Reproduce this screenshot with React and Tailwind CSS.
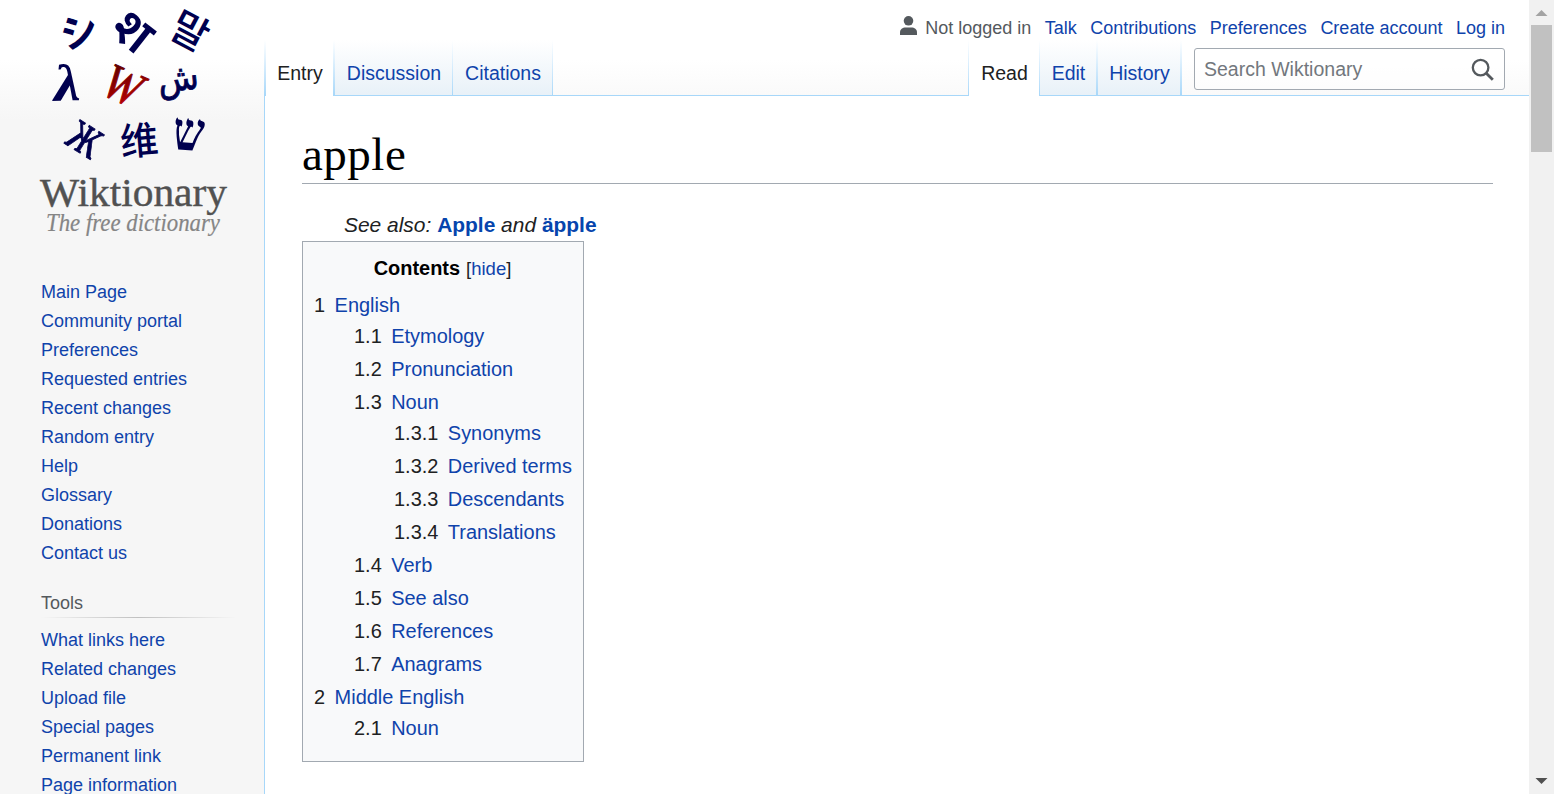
import React from 'react';

const NAV = ['Main Page', 'Community portal', 'Preferences', 'Requested entries', 'Recent changes', 'Random entry', 'Help', 'Glossary', 'Donations', 'Contact us'];
const TOOLS = ['What links here', 'Related changes', 'Upload file', 'Special pages', 'Permanent link', 'Page information'];

const TOC = [
  { n: '1', t: 'English', children: [
    { n: '1.1', t: 'Etymology' },
    { n: '1.2', t: 'Pronunciation' },
    { n: '1.3', t: 'Noun', children: [
      { n: '1.3.1', t: 'Synonyms' },
      { n: '1.3.2', t: 'Derived terms' },
      { n: '1.3.3', t: 'Descendants' },
      { n: '1.3.4', t: 'Translations' },
    ] },
    { n: '1.4', t: 'Verb' },
    { n: '1.5', t: 'See also' },
    { n: '1.6', t: 'References' },
    { n: '1.7', t: 'Anagrams' },
  ] },
  { n: '2', t: 'Middle English', children: [{ n: '2.1', t: 'Noun' }] },
];

function TocList({ items, nested }) {
  return (
    <ul className={nested ? '-mt-0.5 pl-10' : 'pt-px'}>
      {items.map((i) => (
        <li key={i.n}>
          <div className="flex h-[33px] items-center whitespace-nowrap">
            <span className="pr-[9.5px] text-[#202122]">{i.n}</span>
            <a className="text-[#0f43ab]">{i.t}</a>
          </div>
          {i.children && <TocList items={i.children} nested />}
        </li>
      ))}
    </ul>
  );
}

function Glyph({ x, y, r = 0, size, font, weight, fill = '#00004f', italic, sx = 1, stroke = 0, children }) {
  return (
    <text transform={`translate(${x} ${y}) rotate(${r}) scale(${sx} 1)`} fontSize={size} fontFamily={font} fontWeight={weight} fontStyle={italic ? 'italic' : 'normal'} fill={fill} stroke={fill} strokeWidth={stroke} textAnchor="middle" dominantBaseline="central">
      {children}
    </text>
  );
}

function Logo() {
  const serif = '"Liberation Serif", serif';
  return (
    <svg width="264" height="245" viewBox="0 0 264 245" className="block shrink-0 overflow-visible">
      <defs>
        <linearGradient id="red" x1="0" y1="0" x2="0.6" y2="1">
          <stop offset="0" stopColor="#4d0000" />
          <stop offset="1" stopColor="#c00000" />
        </linearGradient>
      </defs>
      <Glyph x={78.5} y={29} r={-16} size={38} font='"Noto Sans CJK JP", sans-serif' weight="700">シ</Glyph>
      <Glyph x={134.5} y={29} r={38} size={51} font='"Noto Sans", sans-serif' weight="600">श</Glyph>
      <Glyph x={191} y={29} r={28} size={40} font='"Noto Sans CJK KR", sans-serif' weight="500">말</Glyph>
      <Glyph x={67} y={83} r={-2} size={52} font={serif} weight="700" italic sx={1.15}>λ</Glyph>
      <Glyph x={123} y={85} r={24} size={50} font={serif} italic fill="url(#red)" sx={0.88} stroke={1}>W</Glyph>
      <Glyph x={178} y={78} r={-6} size={36} font='"DejaVu Sans", sans-serif' weight="400" sx={0.93} stroke={0.8}>ش</Glyph>
      <Glyph x={88} y={134} r={32} size={62} font={serif} weight="400" sx={0.72} stroke={0.9}>ж</Glyph>
      <Glyph x={139} y={138} r={-5} size={38} font='"Noto Sans CJK SC", sans-serif' weight="500">维</Glyph>
      <Glyph x={189} y={132} r={4} size={54} font={serif} weight="700" sx={0.82}>ש</Glyph>
      <text x="40" y="206" fontSize="39" textLength="187" lengthAdjust="spacingAndGlyphs" fontFamily={serif} fill="#515151" stroke="#515151" strokeWidth="0.4">Wiktionary</text>
      <text x="46" y="231" fontSize="25" textLength="174" lengthAdjust="spacingAndGlyphs" fontFamily={serif} fontStyle="italic" fill="#858585" stroke="#858585" strokeWidth="0.2">The free dictionary</text>
    </svg>
  );
}

const EDGE = 'bg-linear-to-b from-white to-[#a7d7f9]';

function Edge({ wide }) {
  return <div className={`${EDGE} h-14 shrink-0 ${wide ? 'w-0.5' : 'w-px'}`} />;
}

function Tab({ label, width, selected }) {
  return (
    <div className={`${width} flex h-14 shrink-0 items-start justify-center whitespace-nowrap pl-px pt-[18px] text-[19.5px] leading-[30px] ${selected ? 'bg-white text-[#202122]' : 'border-b border-[#a7d7f9] bg-linear-to-b from-white to-[#e8f1f8] text-[#0f43ab]'}`}>
      {label}
    </div>
  );
}

function SideList({ items }) {
  return (
    <ul>
      {items.map((i) => (
        <li key={i} className="h-[29px] whitespace-nowrap text-[18px] leading-[29px] text-[#0f43ab]">{i}</li>
      ))}
    </ul>
  );
}

export default function App() {
  return (
    <div className="flex h-[794px] w-[1554px] overflow-hidden bg-[#f6f6f6] font-['Liberation_Sans',Arial,sans-serif]">
      <div className="flex h-full w-[1529px] bg-[linear-gradient(to_bottom,#ffffff_0,#ffffff_60px,#f6f6f6_120px)]">
        <aside className="flex w-[264px] shrink-0 flex-col">
          <Logo />
          <nav className="pl-[41px] pt-[33px]">
            <SideList items={NAV} />
            <h3 className="mt-[21px] h-[28px] text-[18px] leading-[29px] text-[#54595d]">Tools</h3>
            <div className="h-px w-[195px] bg-linear-to-r from-[#f6f6f6] via-[#c0c0c0] to-[#f6f6f6]" />
            <div className="pt-2">
              <SideList items={TOOLS} />
            </div>
          </nav>
        </aside>

        <div className="flex min-w-0 flex-1 flex-col">
          <header className="flex h-24 shrink-0 flex-col">
            <div className="flex h-10 items-start justify-end gap-[13.5px] whitespace-nowrap pr-6 pt-[17px] text-[18px] leading-[22px] text-[#0f43ab]">
              <div className="flex text-[#54595d]">
                <svg width="17" height="19" viewBox="0 0 17 19" className="-mt-px mr-[8.5px]" fill="#54595d">
                  <circle cx="8.5" cy="4.8" r="4.8" />
                  <path d="M0 19v-2.5c0-3.2 2.6-5 5.6-5h5.8c3 0 5.6 1.8 5.6 5v2.5z" />
                </svg>
                Not logged in
              </div>
              <a>Talk</a>
              <a>Contributions</a>
              <a>Preferences</a>
              <a>Create account</a>
              <a>Log in</a>
            </div>
            <div className="flex h-14">
              <Edge wide />
              <Tab label="Entry" width="w-[67px]" selected />
              <Edge wide />
              <Tab label="Discussion" width="w-[117px]" />
              <Edge />
              <Tab label="Citations" width="w-[99px]" />
              <Edge />
              <div className="flex-1 border-b border-[#a7d7f9]" />
              <Edge />
              <Tab label="Read" width="w-[70px]" selected />
              <Edge />
              <Tab label="Edit" width="w-[56px]" />
              <Edge wide />
              <Tab label="History" width="w-[82px]" />
              <Edge wide />
              <div className="w-[347px] shrink-0 border-b border-[#a7d7f9] pl-3 pt-2">
                <div className="flex h-[42px] w-[311px] items-center justify-between rounded-[3px] border border-[#a2a9b1] bg-white/50 pl-[9px] pr-2.5 text-[19.5px] text-[#72777d]">
                  <span className="pt-px">Search Wiktionary</span>
                  <svg width="23" height="23" viewBox="0 0 23 23" fill="none" stroke="#54595d" strokeWidth="2.3">
                    <circle cx="9.6" cy="9.6" r="7.8" />
                    <path d="M15 15l6.8 6.8" strokeWidth="2.8" />
                  </svg>
                </div>
              </div>
            </div>
          </header>

          <main className="flex flex-1 flex-col items-start overflow-hidden border-l border-[#a7d7f9] bg-white pl-[37px] pr-9 pt-[30px]">
            <h1 className="h-[58px] w-full border-b border-[#a2a9b1] font-['Liberation_Serif',serif] text-[47px] leading-[57px] tracking-[0.5px] text-black">apple</h1>
            <p className="mt-[25px] whitespace-nowrap pl-[42px] text-[20.95px] italic leading-8 text-[#202122]">
              See also: <b className="text-[#0645ad] not-italic">Apple</b> and <b className="text-[#0645ad] not-italic">äpple</b>
            </p>
            <section className="h-[521px] w-[282px] border border-[#a2a9b1] bg-[#f8f9fa] pl-[11px] text-[19.95px]">
              <div className="flex h-[46px] items-center justify-center pr-3 pt-2 leading-8">
                <b className="-mt-0.5 mr-1.5 text-black">Contents</b>
                <span className="text-[18.5px] text-[#202122]">[<a className="text-[#0f43ab]">hide</a>]</span>
              </div>
              <TocList items={TOC} />
            </section>
          </main>
        </div>
      </div>

      <div className="flex w-[25px] shrink-0 flex-col items-center bg-[#f1f1f1]">
        <svg width="25" height="25" viewBox="0 0 25 25" className="block shrink-0"><path d="M6.5 16h12L12.5 10z" fill="#a3a3a3" /></svg>
        <div className="h-[127px] w-[21px] bg-[#c1c1c1]" />
        <div className="flex-1" />
        <svg width="25" height="25" viewBox="0 0 25 25" className="block shrink-0"><path d="M6.5 9h12L12.5 15z" fill="#505050" /></svg>
      </div>
    </div>
  );
}
